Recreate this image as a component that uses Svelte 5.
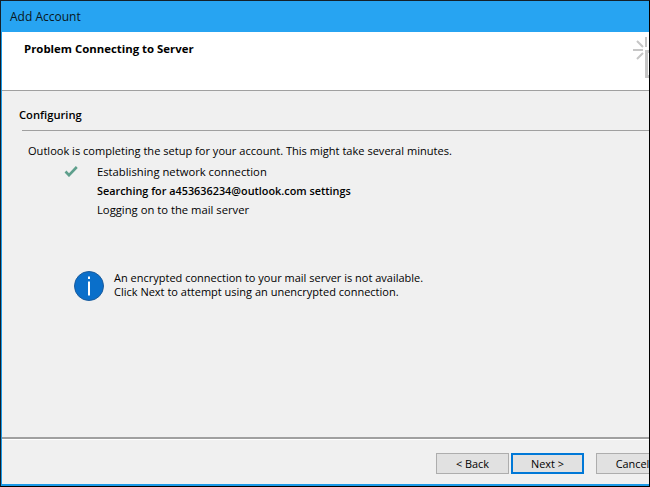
<script lang="ts">
    const steps = [
        { label: "Establishing network connection", done: true },
        { label: "Searching for a453636234@outlook.com settings", active: true },
        { label: "Logging on to the mail server" },
    ];
</script>

<div class="window">
    <header class="titlebar">Add Account</header>

    <section class="banner">
        <h1>Problem Connecting to Server</h1>
        <svg class="spark" width="19" height="45" viewBox="0 0 19 45" aria-hidden="true">
            <g fill="none" stroke="#c6c6c6" stroke-width="2">
                <path d="M16 1V11M3 14H13M7 5L13 11M7 23L13 17" />
                <path d="M19 15.5H16.5V40.5H19" stroke-width="3" />
            </g>
        </svg>
    </section>

    <main class="content">
        <div class="legend">
            <h2>Configuring</h2>
            <div class="rule"></div>
        </div>

        <p class="intro">Outlook is completing the setup for your account. This might take several minutes.</p>

        <ul class="steps">
            {#each steps as step}
                <li class:active={step.active}>
                    <span class="mark">
                        {#if step.done}
                            <svg width="14" height="11" viewBox="0 0 14 11" aria-hidden="true">
                                <path d="M1.5 5.5L5 9.2L12.8 1" fill="none" stroke="#5e9f8c" stroke-width="2.6" />
                            </svg>
                        {/if}
                    </span>
                    {step.label}
                </li>
            {/each}
        </ul>

        <div class="notice">
            <svg class="info" width="30" height="30" viewBox="0 0 30 30" aria-hidden="true">
                <circle cx="15" cy="15" r="14.5" fill="#0a6fca" stroke="#1c5c9c" stroke-width="1" />
                <rect x="14" y="5.5" width="2" height="2.5" fill="#fff" />
                <rect x="14" y="10.5" width="2" height="14" fill="#fff" />
            </svg>
            <p>
                An encrypted connection to your mail server is not available.<br />
                Click Next to attempt using an unencrypted connection.
            </p>
        </div>
    </main>

    <footer class="actions">
        <button>&lt; Back</button>
        <button class="primary">Next &gt;</button>
        <button class="cancel">Cancel</button>
    </footer>
</div>

<style>
    :global(body) {
        margin: 0;
        overflow: hidden;
    }

    .window {
        width: 650px;
        height: 487px;
        box-sizing: border-box;
        display: flex;
        flex-direction: column;
        overflow: hidden;
        background: #f0f0f0;
        color: #000;
        border: 1px solid #14202a;
        border-bottom-color: #000;
        border-right-color: #000;
        box-shadow: inset 1px 0 0 #1b9ae8, inset 0 -2px 0 #1b9ae8;
        font-family: "Open Sans", "Noto Sans", sans-serif;
        font-size: 11.07px;
    }

    .titlebar {
        height: 31px;
        flex: none;
        display: flex;
        align-items: center;
        padding-left: 9px;
        background: #27a4f2;
        color: #0a1720;
        font-size: 12px;
    }

    .banner {
        height: 58px;
        flex: none;
        margin-left: 1px;
        display: flex;
        justify-content: space-between;
        background: #fff;
        border-bottom: 1px solid #a0a0a0;
    }

    h1 {
        margin: 9px 0 0 22px;
        font-size: 11.4px;
        line-height: 15px;
        font-weight: 700;
    }

    .spark {
        margin-top: 4px;
    }

    .content {
        flex: 1;
        padding-left: 1px;
    }

    .legend {
        margin: 16px 0 0 17px;
    }

    h2 {
        margin: 0;
        font-size: 11.2px;
        line-height: 15px;
        font-weight: 600;
    }

    .rule {
        height: 1px;
        margin: 8px 0 0 3px;
        background: #a0a0a0;
    }

    .intro {
        margin: 12px 0 0 26px;
        line-height: 15px;
    }

    .steps {
        list-style: none;
        margin: 4px 0 0 0;
        padding: 0 0 0 62px;
    }

    .steps li {
        display: flex;
        align-items: center;
        height: 19px;
        font-size: 11.25px;
    }

    .steps li.active {
        font-size: 10.85px;
        font-weight: 600;
    }

    .mark {
        width: 33px;
        display: flex;
    }

    .notice {
        display: flex;
        align-items: flex-start;
        gap: 10px;
        margin: 52px 0 0 72px;
    }

    .notice p {
        margin: 0;
        font-size: 11px;
        line-height: 13.5px;
    }

    .actions {
        flex: none;
        height: 47px;
        margin-left: 1px;
        margin-bottom: 2px;
        box-sizing: border-box;
        display: flex;
        gap: 2px;
        padding: 14px 0 0 434px;
        border-top: 2px solid #a0a0a0;
        box-shadow: inset 0 1px 0 #fff;
    }

    button {
        width: 73px;
        height: 21px;
        flex: none;
        padding: 0;
        box-sizing: border-box;
        background: #e1e1e1;
        border: 1px solid #adadad;
        border-radius: 0;
        font: inherit;
        font-size: 10.9px;
        color: #000;
    }

    .primary {
        border: 2px solid #0078d7;
    }

    .cancel {
        margin-left: 10px;
    }
</style>
